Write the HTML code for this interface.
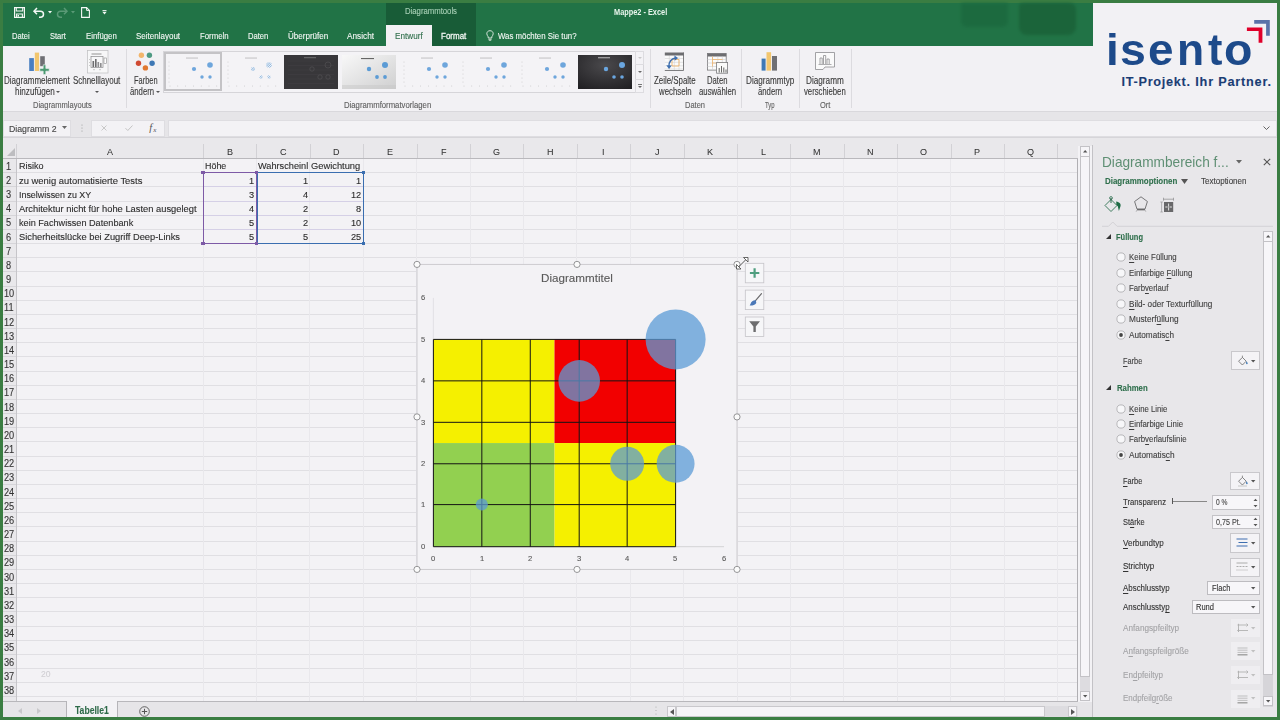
<!DOCTYPE html>
<html><head><meta charset="utf-8"><style>
html,body{margin:0;padding:0;width:1280px;height:720px;overflow:hidden;}
body{position:relative;background:#3a7d42;font-family:"Liberation Sans",sans-serif;}
.a{position:absolute;}
.t{position:absolute;white-space:pre;line-height:1;transform-origin:0 0;-webkit-text-stroke:0.12px currentColor;}
svg{position:absolute;overflow:visible;}

</style></head><body>
<div class="a" style="left:3px;top:3px;width:1274px;height:42.5px;background:#217346;"></div>
<div class="a" style="left:961px;top:3px;width:47px;height:24px;background:#1c6a3f;filter:blur(1.5px);border-radius:2px 2px 6px 6px;opacity:.9"></div>
<div class="a" style="left:1019px;top:3px;width:57px;height:32px;background:#1b6339;filter:blur(1.5px);border-radius:4px 6px 8px 8px;opacity:.9"></div>
<div class="a" style="left:386px;top:3px;width:90px;height:42.5px;background:#185c37;"></div>
<div class="a" style="left:386px;top:24.8px;width:45.5px;height:21px;background:#f2f1f4;"></div>
<div class="t" style="left:11.70px;top:31.36px;font-size:9.5px;color:#f3f7f4;transform:scaleX(0.7977);">Datei</div>
<div class="t" style="left:50.00px;top:31.36px;font-size:9.5px;color:#f3f7f4;transform:scaleX(0.7925);">Start</div>
<div class="t" style="left:85.60px;top:31.36px;font-size:9.5px;color:#f3f7f4;transform:scaleX(0.8210);">Einfügen</div>
<div class="t" style="left:135.90px;top:31.36px;font-size:9.5px;color:#f3f7f4;transform:scaleX(0.8433);">Seitenlayout</div>
<div class="t" style="left:199.70px;top:31.36px;font-size:9.5px;color:#f3f7f4;transform:scaleX(0.8208);">Formeln</div>
<div class="t" style="left:247.80px;top:31.36px;font-size:9.5px;color:#f3f7f4;transform:scaleX(0.8005);">Daten</div>
<div class="t" style="left:288.10px;top:31.36px;font-size:9.5px;color:#f3f7f4;transform:scaleX(0.8458);">Überprüfen</div>
<div class="t" style="left:347.00px;top:31.36px;font-size:9.5px;color:#f3f7f4;transform:scaleX(0.8666);">Ansicht</div>
<div class="t" style="left:394.50px;top:31.36px;font-size:9.5px;color:#2e6e4a;transform:scaleX(0.8597);">Entwurf</div>
<div class="t" style="left:441.40px;top:31.36px;font-size:9.5px;color:#f3f7f4;transform:scaleX(0.8407);-webkit-text-stroke:0.3px currentColor;">Format</div>
<div class="t" style="left:497.90px;top:31.36px;font-size:9.5px;color:#f3f7f4;transform:scaleX(0.8243);">Was möchten Sie tun?</div>
<div class="t" style="left:404.60px;top:7.40px;font-size:9px;color:#a8d0b6;transform:scaleX(0.8591);">Diagrammtools</div>
<div class="t" style="left:613.90px;top:7.66px;font-size:9.3px;color:#eaf6ee;font-weight:700;transform:scaleX(0.7920);-webkit-text-stroke:0;">Mappe2 - Excel</div>
<svg style="left:486px;top:30px" width="8" height="11" viewBox="0 0 8 11"><path d="M4 0.7C2 0.7 0.8 2.1 0.8 3.8c0 1.3 1 2.1 1.4 3v1.2h3.6V6.8c.4-.9 1.4-1.7 1.4-3C7.2 2.1 6 .7 4 .7z" fill="none" stroke="#e8f0ea" stroke-width="0.9"/><path d="M2.4 9.3h3.2M2.8 10.3h2.4" stroke="#e8f0ea" stroke-width="0.8"/></svg>
<svg style="left:14px;top:7px" width="11" height="11" viewBox="0 0 11 11"><path d="M0.6 0.6h9.8v9.8H0.6z" fill="none" stroke="#f4f8f5" stroke-width="1.2"/><path d="M2.3 0.6v3.4h6.4V0.6" fill="none" stroke="#f4f8f5" stroke-width="1.1"/><path d="M2.6 10.4V7h5.8v3.4" fill="none" stroke="#f4f8f5" stroke-width="1.1"/><rect x="3.6" y="8" width="1.4" height="1.6" fill="#f4f8f5"/></svg>
<svg style="left:33px;top:7px" width="12" height="11" viewBox="0 0 12 11"><path d="M1 4.2h6.3c1.9 0 3.2 1.3 3.2 3s-1.3 3-3.2 3H6" fill="none" stroke="#f4f8f5" stroke-width="1.5"/><path d="M4 1.1L1 4.2l3 3.1" fill="none" stroke="#f4f8f5" stroke-width="1.5"/></svg>
<svg style="left:47.5px;top:10.5px" width="4" height="3" viewBox="0 0 4 3"><path d="M0 0h4L2 2.5z" fill="#f4f8f5"/></svg>
<svg style="left:56px;top:7px" width="12" height="11" viewBox="0 0 12 11"><path d="M11 4.2H4.7c-1.9 0-3.2 1.3-3.2 3s1.3 3 3.2 3H6" fill="none" stroke="#5a9a76" stroke-width="1.5"/><path d="M8 1.1l3 3.1-3 3.1" fill="none" stroke="#5a9a76" stroke-width="1.5"/></svg>
<svg style="left:71px;top:10.5px" width="4" height="3" viewBox="0 0 4 3"><path d="M0 0h4L2 2.5z" fill="#5a9a76"/></svg>
<svg style="left:81px;top:7px" width="9" height="11" viewBox="0 0 9 11"><path d="M0.6 0.6h5l2.8 2.8v7H0.6z" fill="none" stroke="#f4f8f5" stroke-width="1.1"/><path d="M5.6 0.6v2.8h2.8" fill="none" stroke="#f4f8f5" stroke-width="1"/></svg>
<svg style="left:102px;top:10px" width="5" height="5" viewBox="0 0 5 5"><path d="M0.5 0.5h4" stroke="#f4f8f5" stroke-width="0.9"/><path d="M0.3 1.8h4.4L2.5 4.4z" fill="#f4f8f5"/></svg>
<div class="a" style="left:1092.5px;top:3px;width:184.5px;height:108px;background:#f2f1f4;"></div>
<div class="t" style="left:1105.62px;top:28.41px;font-size:44px;color:#1d4a8a;font-weight:700;transform:scaleX(1.0417);-webkit-text-stroke:0;">i</div>
<div class="t" style="left:1119.79px;top:28.41px;font-size:44px;color:#1d4a8a;font-weight:700;transform:scaleX(1.0571);-webkit-text-stroke:0;">s</div>
<div class="t" style="left:1147.91px;top:28.41px;font-size:44px;color:#1d4a8a;font-weight:700;transform:scaleX(1.0429);-webkit-text-stroke:0;">e</div>
<div class="t" style="left:1176.67px;top:28.41px;font-size:44px;color:#1d4a8a;font-weight:700;transform:scaleX(1.0095);-webkit-text-stroke:0;">n</div>
<div class="t" style="left:1207.50px;top:28.41px;font-size:44px;color:#1d4a8a;font-weight:700;transform:scaleX(0.9821);-webkit-text-stroke:0;">t</div>
<div class="t" style="left:1224.49px;top:28.41px;font-size:44px;color:#1d4a8a;font-weight:700;transform:scaleX(1.0565);-webkit-text-stroke:0;">o</div>
<div class="t" style="left:1121.50px;top:76.25px;font-size:12.7px;color:#1b3d74;font-weight:700;letter-spacing:0.72px;-webkit-text-stroke:0.1px currentColor;">IT-Projekt.</div>
<div class="t" style="left:1195.25px;top:76.25px;font-size:12.7px;color:#1b3d74;font-weight:700;letter-spacing:0.8px;-webkit-text-stroke:0.1px currentColor;">Ihr Partner.</div>
<svg style="left:1246px;top:19px" width="26" height="25" viewBox="0 0 26 25"><path d="M8.2 1.1h15.6v3.7H8.2z M20.1 1.1h3.7v15.6h-3.7z" fill="#5b72a8"/><path d="M0.9 8.5h15.5v3.5H0.9z M12.6 8.5h3.8v15.3h-3.8z" fill="#e0002a"/></svg>
<div class="a" style="left:3px;top:45.5px;width:1089.5px;height:65.5px;background:#f2f1f4;"></div>
<div class="a" style="left:3px;top:111px;width:1274px;height:8px;background:#e6e5e8;"></div>
<div class="a" style="left:3px;top:110.6px;width:1274px;height:0.8px;background:#d9d8dc;"></div>
<div class="a" style="left:125.5px;top:49px;width:0.8px;height:59px;background:#dcdbdf;"></div>
<div class="a" style="left:649.5px;top:49px;width:0.8px;height:59px;background:#dcdbdf;"></div>
<div class="a" style="left:741.4px;top:49px;width:0.8px;height:59px;background:#dcdbdf;"></div>
<div class="a" style="left:799px;top:49px;width:0.8px;height:59px;background:#dcdbdf;"></div>
<div class="a" style="left:850.5px;top:49px;width:0.8px;height:59px;background:#dcdbdf;"></div>
<svg style="left:28px;top:52px" width="22" height="22" viewBox="0 0 22 22"><rect x="1.2" y="6.1" width="4.7" height="12.9" fill="#4a7fc1"/><rect x="6.8" y="0.6" width="4.3" height="18.4" fill="#f2c66e"/><rect x="12.2" y="4.2" width="4.6" height="10" fill="#6f6f74"/><path d="M15.2 12.8h2.6v3.6h3.4v2.8h-3.4v3.4h-2.6v-3.4h-3.4v-2.8h3.4z" fill="#4b9a72" stroke="#f2f1f4" stroke-width="0.6"/></svg>
<div class="t" style="left:4.35px;top:75.81px;font-size:10px;color:#3b3b3b;transform:scaleX(0.8041);">Diagrammelement</div>
<div class="t" style="left:14.60px;top:86.71px;font-size:10px;color:#3b3b3b;transform:scaleX(0.8133);">hinzufügen</div>
<svg style="left:56.4px;top:91.0px" width="4" height="2.0" viewBox="0 0 4 2"><path d="M0 0h4L2 2z" fill="#555"/></svg>
<svg style="left:86.5px;top:50px" width="22" height="24" viewBox="0 0 22 24"><rect x="0.5" y="0.5" width="20.5" height="22.5" fill="#f7f7f8" stroke="#bdbdbf" stroke-width="0.7"/><rect x="4.5" y="3.2" width="10" height="1.6" fill="#b8b8b8"/><rect x="4" y="6.5" width="12" height="11" fill="none" stroke="#8b8b8d" stroke-width="0.7"/><rect x="5.5" y="11" width="1.6" height="6" fill="#6d6d6f"/><rect x="8" y="9" width="1.6" height="8" fill="#6d6d6f"/><rect x="10.5" y="12" width="1.6" height="5" fill="#8d8d8f"/><rect x="13" y="13" width="1.6" height="4" fill="#8d8d8f"/><rect x="17" y="8" width="2.6" height="5.5" fill="#fff" stroke="#8b8b8d" stroke-width="0.6"/><rect x="2" y="9" width="0.7" height="0.7" fill="#999"/><rect x="2" y="12" width="0.7" height="0.7" fill="#999"/><rect x="2" y="15" width="0.7" height="0.7" fill="#999"/><rect x="6" y="19.5" width="2" height="0.6" fill="#aaa"/><rect x="12" y="19.5" width="2" height="0.6" fill="#aaa"/></svg>
<div class="t" style="left:73.35px;top:75.81px;font-size:10px;color:#3b3b3b;transform:scaleX(0.7952);">Schnelllayout</div>
<svg style="left:95.0px;top:90.8px" width="4" height="2.0" viewBox="0 0 4 2"><path d="M0 0h4L2 2z" fill="#555"/></svg>
<svg style="left:134px;top:51px" width="22" height="21" viewBox="0 0 22 21"><circle cx="7.4" cy="4.3" r="2.7" fill="#f2b56b"/><circle cx="15.4" cy="4.3" r="2.7" fill="#4e9a83"/><circle cx="4.5" cy="12.2" r="2.7" fill="#d04a32"/><circle cx="18.1" cy="12.2" r="2.7" fill="#3e78b5"/><circle cx="11.4" cy="16.9" r="2.7" fill="#e07830"/></svg>
<div class="t" style="left:133.50px;top:75.81px;font-size:10px;color:#3b3b3b;transform:scaleX(0.7448);">Farben</div>
<div class="t" style="left:129.95px;top:86.71px;font-size:10px;color:#3b3b3b;transform:scaleX(0.7739);">ändern</div>
<svg style="left:156.3px;top:91.0px" width="4" height="2.0" viewBox="0 0 4 2"><path d="M0 0h4L2 2z" fill="#555"/></svg>
<div class="t" style="left:32.95px;top:101.35px;font-size:8.5px;color:#5f5f5f;transform:scaleX(0.8875);">Diagrammlayouts</div>
<div class="a" style="left:163.2px;top:50.5px;width:481px;height:42.2px;background:#f4f3f6;border:0.8px solid #d6d5d9;box-sizing:border-box;"></div>
<div class="a" style="left:163.5px;top:52px;width:58.5px;height:38.6px;border:2px solid #c4c3c6;box-sizing:border-box;"></div>
<svg style="left:166.0px;top:54.8px" width="54" height="34" viewBox="0 0 54 34"><rect x="20" y="2.6" width="12" height="0.9" fill="#777" opacity="0.45"/><circle cx="4.0" cy="31" r="0.4" fill="#aaa"/><circle cx="11.8" cy="31" r="0.4" fill="#aaa"/><circle cx="19.6" cy="31" r="0.4" fill="#aaa"/><circle cx="27.4" cy="31" r="0.4" fill="#aaa"/><circle cx="35.2" cy="31" r="0.4" fill="#aaa"/><circle cx="43.0" cy="31" r="0.4" fill="#aaa"/><circle cx="50.8" cy="31" r="0.4" fill="#aaa"/><circle cx="3" cy="7" r="0.4" fill="#aaa"/><circle cx="3" cy="11" r="0.4" fill="#aaa"/><circle cx="3" cy="15" r="0.4" fill="#aaa"/><circle cx="3" cy="19" r="0.4" fill="#aaa"/><circle cx="3" cy="23" r="0.4" fill="#aaa"/><circle cx="3" cy="27" r="0.4" fill="#aaa"/><circle cx="28" cy="14" r="2.1" fill="#6ea6dc" opacity="1"/><circle cx="44" cy="10" r="2.8" fill="#6ea6dc" opacity="1"/><circle cx="36" cy="22" r="1.7" fill="#6ea6dc" opacity="1"/><circle cx="44" cy="22" r="1.7" fill="#6ea6dc" opacity="1"/></svg>
<svg style="left:224.8px;top:54.8px" width="54" height="34" viewBox="0 0 54 34"><rect x="20" y="2.6" width="12" height="0.9" fill="#777" opacity="0.45"/><circle cx="4.0" cy="31" r="0.4" fill="#aaa"/><circle cx="11.8" cy="31" r="0.4" fill="#aaa"/><circle cx="19.6" cy="31" r="0.4" fill="#aaa"/><circle cx="27.4" cy="31" r="0.4" fill="#aaa"/><circle cx="35.2" cy="31" r="0.4" fill="#aaa"/><circle cx="43.0" cy="31" r="0.4" fill="#aaa"/><circle cx="50.8" cy="31" r="0.4" fill="#aaa"/><circle cx="3" cy="7" r="0.4" fill="#aaa"/><circle cx="3" cy="11" r="0.4" fill="#aaa"/><circle cx="3" cy="15" r="0.4" fill="#aaa"/><circle cx="3" cy="19" r="0.4" fill="#aaa"/><circle cx="3" cy="23" r="0.4" fill="#aaa"/><circle cx="3" cy="27" r="0.4" fill="#aaa"/><defs><pattern id="hp" width="1.6" height="1.6" patternUnits="userSpaceOnUse" patternTransform="rotate(45)"><rect width="0.8" height="1.6" fill="#5b9bd5"/></pattern></defs><circle cx="28" cy="14" r="2.1" fill="url(#hp)" opacity="0.7"/><circle cx="44" cy="10" r="2.8" fill="url(#hp)" opacity="0.7"/><circle cx="36" cy="22" r="1.7" fill="url(#hp)" opacity="0.7"/><circle cx="44" cy="22" r="1.7" fill="url(#hp)" opacity="0.7"/></svg>
<svg style="left:283.6px;top:54.8px" width="54" height="34" viewBox="0 0 54 34"><rect x="0" y="0" width="54" height="34" fill="#38373a"/><line x1="4" x2="50" y1="6.0" y2="6.0" stroke="#424144" stroke-width="0.5"/><line x1="4" x2="50" y1="10.5" y2="10.5" stroke="#424144" stroke-width="0.5"/><line x1="4" x2="50" y1="15.0" y2="15.0" stroke="#424144" stroke-width="0.5"/><line x1="4" x2="50" y1="19.5" y2="19.5" stroke="#424144" stroke-width="0.5"/><line x1="4" x2="50" y1="24.0" y2="24.0" stroke="#424144" stroke-width="0.5"/><line x1="4" x2="50" y1="28.5" y2="28.5" stroke="#424144" stroke-width="0.5"/><rect x="20" y="2.2" width="12" height="1" fill="#888" opacity="0.7"/><circle cx="28" cy="14" r="2.2" fill="none" stroke="#555457" stroke-width="0.6"/><circle cx="44" cy="10" r="3" fill="none" stroke="#555457" stroke-width="0.6"/><circle cx="36" cy="22" r="2.2" fill="none" stroke="#555457" stroke-width="0.6"/><circle cx="44" cy="22" r="2.2" fill="none" stroke="#555457" stroke-width="0.6"/></svg>
<svg style="left:342.4px;top:54.8px" width="54" height="34" viewBox="0 0 54 34"><defs><linearGradient id="gg" x1="0" y1="0" x2="1" y2="1"><stop offset="0" stop-color="#f8f8f8"/><stop offset="1" stop-color="#cfcfd0"/></linearGradient></defs><rect x="0" y="0" width="54" height="34" fill="url(#gg)"/><rect x="0" y="30" width="54" height="4" fill="#c8c8c8" opacity="0.5"/><rect x="19" y="3" width="13" height="1.1" fill="#444" opacity="0.8"/><circle cx="27" cy="14" r="2.2" fill="#5b9bd5"/><circle cx="43" cy="10" r="3" fill="#5b9bd5"/><circle cx="35" cy="22" r="1.9" fill="#5b9bd5"/><circle cx="43" cy="22" r="1.9" fill="#5b9bd5"/></svg>
<svg style="left:401.2px;top:54.8px" width="54" height="34" viewBox="0 0 54 34"><rect x="20" y="2.6" width="12" height="0.9" fill="#777" opacity="0.45"/><circle cx="4.0" cy="31" r="0.4" fill="#aaa"/><circle cx="11.8" cy="31" r="0.4" fill="#aaa"/><circle cx="19.6" cy="31" r="0.4" fill="#aaa"/><circle cx="27.4" cy="31" r="0.4" fill="#aaa"/><circle cx="35.2" cy="31" r="0.4" fill="#aaa"/><circle cx="43.0" cy="31" r="0.4" fill="#aaa"/><circle cx="50.8" cy="31" r="0.4" fill="#aaa"/><circle cx="3" cy="7" r="0.4" fill="#aaa"/><circle cx="3" cy="11" r="0.4" fill="#aaa"/><circle cx="3" cy="15" r="0.4" fill="#aaa"/><circle cx="3" cy="19" r="0.4" fill="#aaa"/><circle cx="3" cy="23" r="0.4" fill="#aaa"/><circle cx="3" cy="27" r="0.4" fill="#aaa"/><circle cx="28" cy="14" r="2.1" fill="#6ea6dc" opacity="1"/><circle cx="44" cy="10" r="2.8" fill="#6ea6dc" opacity="1"/><circle cx="36" cy="22" r="1.7" fill="#6ea6dc" opacity="1"/><circle cx="44" cy="22" r="1.7" fill="#6ea6dc" opacity="1"/></svg>
<svg style="left:460.0px;top:54.8px" width="54" height="34" viewBox="0 0 54 34"><rect x="20" y="2.6" width="12" height="0.9" fill="#777" opacity="0.45"/><circle cx="4.0" cy="31" r="0.4" fill="#aaa"/><circle cx="11.8" cy="31" r="0.4" fill="#aaa"/><circle cx="19.6" cy="31" r="0.4" fill="#aaa"/><circle cx="27.4" cy="31" r="0.4" fill="#aaa"/><circle cx="35.2" cy="31" r="0.4" fill="#aaa"/><circle cx="43.0" cy="31" r="0.4" fill="#aaa"/><circle cx="50.8" cy="31" r="0.4" fill="#aaa"/><circle cx="3" cy="7" r="0.4" fill="#aaa"/><circle cx="3" cy="11" r="0.4" fill="#aaa"/><circle cx="3" cy="15" r="0.4" fill="#aaa"/><circle cx="3" cy="19" r="0.4" fill="#aaa"/><circle cx="3" cy="23" r="0.4" fill="#aaa"/><circle cx="3" cy="27" r="0.4" fill="#aaa"/><circle cx="28" cy="14" r="2.1" fill="#6ea6dc" opacity="1"/><circle cx="44" cy="10" r="2.8" fill="#6ea6dc" opacity="1"/><circle cx="36" cy="22" r="1.7" fill="#6ea6dc" opacity="1"/><circle cx="44" cy="22" r="1.7" fill="#6ea6dc" opacity="1"/></svg>
<svg style="left:518.8px;top:54.8px" width="54" height="34" viewBox="0 0 54 34"><rect x="20" y="2.6" width="12" height="0.9" fill="#777" opacity="0.45"/><circle cx="4.0" cy="31" r="0.4" fill="#aaa"/><circle cx="11.8" cy="31" r="0.4" fill="#aaa"/><circle cx="19.6" cy="31" r="0.4" fill="#aaa"/><circle cx="27.4" cy="31" r="0.4" fill="#aaa"/><circle cx="35.2" cy="31" r="0.4" fill="#aaa"/><circle cx="43.0" cy="31" r="0.4" fill="#aaa"/><circle cx="50.8" cy="31" r="0.4" fill="#aaa"/><circle cx="3" cy="7" r="0.4" fill="#aaa"/><circle cx="3" cy="11" r="0.4" fill="#aaa"/><circle cx="3" cy="15" r="0.4" fill="#aaa"/><circle cx="3" cy="19" r="0.4" fill="#aaa"/><circle cx="3" cy="23" r="0.4" fill="#aaa"/><circle cx="3" cy="27" r="0.4" fill="#aaa"/><circle cx="28" cy="14" r="2.1" fill="#6ea6dc" opacity="1"/><circle cx="44" cy="10" r="2.8" fill="#6ea6dc" opacity="1"/><circle cx="36" cy="22" r="1.7" fill="#6ea6dc" opacity="1"/><circle cx="44" cy="22" r="1.7" fill="#6ea6dc" opacity="1"/></svg>
<svg style="left:577.6px;top:54.8px" width="54" height="34" viewBox="0 0 54 34"><defs><radialGradient id="dg" cx="0.5" cy="0.3" r="0.8"><stop offset="0" stop-color="#4a494c"/><stop offset="1" stop-color="#222124"/></radialGradient></defs><rect x="0" y="0" width="54" height="34" fill="url(#dg)"/><rect x="20" y="2.2" width="12" height="1.1" fill="#d0d0d0" opacity="0.8"/><circle cx="28" cy="14" r="2.2" fill="#6aa6e0"/><circle cx="44" cy="10" r="3" fill="#6aa6e0"/><circle cx="36" cy="22" r="1.8" fill="#6aa6e0"/><circle cx="44" cy="22" r="1.8" fill="#6aa6e0"/></svg>
<div class="a" style="left:635.2px;top:50.5px;width:9px;height:42.2px;background:#f4f3f6;border:0.8px solid #d6d5d9;box-sizing:border-box;"></div>
<div class="a" style="left:635.2px;top:50.5px;width:9px;height:14px;border:0.8px solid #dddce0;box-sizing:border-box;"></div>
<div class="a" style="left:635.2px;top:78.5px;width:9px;height:14.2px;border:0.8px solid #dddce0;box-sizing:border-box;"></div>
<svg style="left:637.7px;top:57.0px" width="4" height="2.0" viewBox="0 0 4 2"><path d="M0 0h4L2 2z" fill="#c9c9c9"/></svg>
<svg style="left:637.7px;top:70.5px" width="4" height="2.0" viewBox="0 0 4 2"><path d="M0 0h4L2 2z" fill="#666"/></svg>
<div class="a" style="left:637.7px;top:84px;width:4px;height:0.7px;background:#777;"></div>
<svg style="left:637.7px;top:86.0px" width="4" height="2.0" viewBox="0 0 4 2"><path d="M0 0h4L2 2z" fill="#666"/></svg>
<div class="t" style="left:344.00px;top:101.35px;font-size:8.5px;color:#5f5f5f;transform:scaleX(0.9092);">Diagrammformatvorlagen</div>
<svg style="left:664px;top:51.5px" width="21" height="19" viewBox="0 0 21 19"><rect x="0.8" y="0.5" width="19" height="18" fill="#fafafa"/><path d="M0.8 6.5h19M0.8 10.3h19M0.8 13.8h19M0.8 17h19M5.3 3.5v15M10.3 3.5v15M15 3.5v15" stroke="#d3d3d5" stroke-width="0.6"/><path d="M8 7.5h7v6.5H8z" fill="none" stroke="#f0b060" stroke-width="0.8"/><path d="M19.5 0.5v18H0.8" fill="none" stroke="#707073" stroke-width="0.9"/><rect x="0.8" y="0.5" width="19" height="3" fill="#6d6d70"/><path d="M5 14.5C4.5 10 7.5 6.5 11.5 6" fill="none" stroke="#3e6fb0" stroke-width="1.5"/><path d="M10.5 3.5l3.6 2.5-3.4 2.8z" fill="#3e6fb0"/><path d="M2.3 13.2l2.7 3.8 2.8-3.6z" fill="#3e6fb0"/></svg>
<div class="t" style="left:653.70px;top:75.81px;font-size:10px;color:#3b3b3b;transform:scaleX(0.7877);">Zeile/Spalte</div>
<div class="t" style="left:658.60px;top:86.91px;font-size:10px;color:#3b3b3b;transform:scaleX(0.7817);">wechseln</div>
<svg style="left:707px;top:52.5px" width="22" height="21" viewBox="0 0 22 21"><rect x="0.5" y="0.5" width="18.7" height="16.6" fill="#fafafa" stroke="#7a7a7d" stroke-width="0.8"/><rect x="0.5" y="0.5" width="18.7" height="3" fill="#6d6d70"/><path d="M0.5 6.5h18.7M0.5 10h18.7M0.5 13.5h18.7M5.5 3.5v13.6M10.8 3.5v13.6M15.3 3.5v13.6" stroke="#cfcfd1" stroke-width="0.6"/><path d="M5.5 6.5h10M5.5 10h10M5.5 3.5v10" stroke="#f0b060" stroke-width="0.7"/><rect x="9.6" y="9.5" width="11" height="10.7" fill="#fafafa" stroke="#7a7a7d" stroke-width="0.8"/><path d="M12.2 19.5v-4.5M14.5 19.5v-6.5M16.8 19.5v-5M19 19.5v-3" stroke="#555" stroke-width="0.9"/></svg>
<div class="t" style="left:707.45px;top:75.81px;font-size:10px;color:#3b3b3b;transform:scaleX(0.7681);">Daten</div>
<div class="t" style="left:698.75px;top:86.91px;font-size:10px;color:#3b3b3b;transform:scaleX(0.7759);">auswählen</div>
<div class="t" style="left:685.00px;top:101.35px;font-size:8.5px;color:#5f5f5f;transform:scaleX(0.8815);">Daten</div>
<svg style="left:761px;top:52px" width="17" height="19" viewBox="0 0 17 19"><rect x="0.6" y="6.6" width="4" height="12" fill="#3e78b5"/><rect x="5.5" y="0.2" width="4.6" height="18.4" fill="#f2c66e"/><rect x="11" y="4" width="5" height="14.6" fill="#6f6f74"/></svg>
<div class="t" style="left:745.70px;top:75.81px;font-size:10px;color:#3b3b3b;transform:scaleX(0.8139);">Diagrammtyp</div>
<div class="t" style="left:757.65px;top:86.91px;font-size:10px;color:#3b3b3b;transform:scaleX(0.7739);">ändern</div>
<div class="t" style="left:765.35px;top:101.35px;font-size:8.5px;color:#5f5f5f;transform:scaleX(0.6933);">Typ</div>
<svg style="left:815px;top:52px" width="21" height="19" viewBox="0 0 21 19"><path d="M0.5 0.5h19v14.5H10l-2 2.5H0.5z" fill="#fafafa" stroke="#8d8d8f" stroke-width="0.8"/><path d="M5 12V6h2.2v6M8.5 12V3.5h2.2V12M12 12V7h2.2v5" fill="none" stroke="#8d8d8f" stroke-width="0.8"/><path d="M3.5 12.5h13" stroke="#8d8d8f" stroke-width="0.7"/></svg>
<div class="t" style="left:806.30px;top:75.81px;font-size:10px;color:#3b3b3b;transform:scaleX(0.8195);">Diagramm</div>
<div class="t" style="left:804.15px;top:86.91px;font-size:10px;color:#3b3b3b;transform:scaleX(0.7733);">verschieben</div>
<div class="t" style="left:820.00px;top:101.35px;font-size:8.5px;color:#5f5f5f;transform:scaleX(0.8804);">Ort</div>
<div class="a" style="left:3px;top:119px;width:1274px;height:18.5px;background:#e6e5e8;"></div>
<div class="a" style="left:3px;top:119.5px;width:68px;height:17.5px;background:#f3f2f5;border:0.7px solid #dedde1;box-sizing:border-box;"></div>
<div class="a" style="left:91.4px;top:119.5px;width:73.4px;height:17.5px;background:#f3f2f5;border:0.7px solid #dedde1;box-sizing:border-box;"></div>
<div class="a" style="left:167.5px;top:119.5px;width:1109.5px;height:17.5px;background:#f3f2f5;border:0.7px solid #dedde1;box-sizing:border-box;"></div>
<div class="t" style="left:8.60px;top:123.76px;font-size:9.5px;color:#444;transform:scaleX(0.9198);">Diagramm 2</div>
<svg style="left:62px;top:126px" width="5" height="3" viewBox="0 0 5 3"><path d="M0 0h5L2.5 3z" fill="#666"/></svg>
<svg style="left:80.5px;top:124px" width="2" height="8" viewBox="0 0 2 8"><circle cx="1" cy="1" r="0.6" fill="#999"/><circle cx="1" cy="4" r="0.6" fill="#999"/><circle cx="1" cy="7" r="0.6" fill="#999"/></svg>
<svg style="left:101px;top:125px" width="6" height="6" viewBox="0 0 6 6"><path d="M0.5 0.5l5 5M5.5 0.5l-5 5" stroke="#bdbdbd" stroke-width="0.8"/></svg>
<svg style="left:124.5px;top:125px" width="8" height="6" viewBox="0 0 8 6"><path d="M0.5 3.2l2.3 2.3 4.7-5" fill="none" stroke="#bdbdbd" stroke-width="0.9"/></svg>
<div class="t" style="left:149.20px;top:122.87px;font-size:10.5px;color:#555;font-family:'Liberation Serif';font-style:italic;-webkit-text-stroke:0;">f</div>
<div class="t" style="left:153.30px;top:126.58px;font-size:7px;color:#555;font-family:'Liberation Serif';font-style:italic;-webkit-text-stroke:0;">x</div>
<svg style="left:1263px;top:125.5px" width="7" height="4" viewBox="0 0 7 4"><path d="M0.5 0.5l3 3 3-3" fill="none" stroke="#555" stroke-width="0.9"/></svg>
<div class="a" style="left:3px;top:137px;width:1089.5px;height:6.5px;background:#e9e8eb;"></div>
<div class="a" style="left:3px;top:137px;width:1274px;height:0.7px;background:#d6d5d9;"></div>
<div class="a" style="left:3px;top:143.5px;width:1074.5px;height:15px;background:#e9e8eb;"></div>
<div class="a" style="left:3px;top:158.1px;width:1074.5px;height:0.8px;background:#b9b8bc;"></div>
<svg style="left:7px;top:147.5px" width="8" height="8" viewBox="0 0 8 8"><path d="M8 0v8H0z" fill="#bdbdc0"/></svg>
<div class="t" style="left:106.74px;top:146.66px;font-size:9.5px;color:#333;transform:scaleX(0.9500);-webkit-text-stroke:0.05px currentColor;">A</div>
<div class="a" style="left:203px;top:143.5px;width:0.7px;height:14.6px;background:#d2d1d5;"></div>
<div class="t" style="left:226.69px;top:146.66px;font-size:9.5px;color:#333;transform:scaleX(0.9500);-webkit-text-stroke:0.05px currentColor;">B</div>
<div class="a" style="left:256.4px;top:143.5px;width:0.7px;height:14.6px;background:#d2d1d5;"></div>
<div class="t" style="left:279.83px;top:146.66px;font-size:9.5px;color:#333;transform:scaleX(0.9500);-webkit-text-stroke:0.05px currentColor;">C</div>
<div class="a" style="left:309.8px;top:143.5px;width:0.7px;height:14.6px;background:#d2d1d5;"></div>
<div class="t" style="left:333.23px;top:146.66px;font-size:9.5px;color:#333;transform:scaleX(0.9500);-webkit-text-stroke:0.05px currentColor;">D</div>
<div class="a" style="left:363.2px;top:143.5px;width:0.7px;height:14.6px;background:#d2d1d5;"></div>
<div class="t" style="left:386.89px;top:146.66px;font-size:9.5px;color:#333;transform:scaleX(0.9500);-webkit-text-stroke:0.05px currentColor;">E</div>
<div class="a" style="left:416.6px;top:143.5px;width:0.7px;height:14.6px;background:#d2d1d5;"></div>
<div class="t" style="left:440.54px;top:146.66px;font-size:9.5px;color:#333;transform:scaleX(0.9500);-webkit-text-stroke:0.05px currentColor;">F</div>
<div class="a" style="left:470.0px;top:143.5px;width:0.7px;height:14.6px;background:#d2d1d5;"></div>
<div class="t" style="left:493.19px;top:146.66px;font-size:9.5px;color:#333;transform:scaleX(0.9500);-webkit-text-stroke:0.05px currentColor;">G</div>
<div class="a" style="left:523.4px;top:143.5px;width:0.7px;height:14.6px;background:#d2d1d5;"></div>
<div class="t" style="left:546.83px;top:146.66px;font-size:9.5px;color:#333;transform:scaleX(0.9500);-webkit-text-stroke:0.05px currentColor;">H</div>
<div class="a" style="left:576.8px;top:143.5px;width:0.7px;height:14.6px;background:#d2d1d5;"></div>
<div class="t" style="left:602.25px;top:146.66px;font-size:9.5px;color:#333;transform:scaleX(0.9500);-webkit-text-stroke:0.05px currentColor;">I</div>
<div class="a" style="left:630.2px;top:143.5px;width:0.7px;height:14.6px;background:#d2d1d5;"></div>
<div class="t" style="left:654.64px;top:146.66px;font-size:9.5px;color:#333;transform:scaleX(0.9500);-webkit-text-stroke:0.05px currentColor;">J</div>
<div class="a" style="left:683.5999999999999px;top:143.5px;width:0.7px;height:14.6px;background:#d2d1d5;"></div>
<div class="t" style="left:707.29px;top:146.66px;font-size:9.5px;color:#333;transform:scaleX(0.9500);-webkit-text-stroke:0.05px currentColor;">K</div>
<div class="a" style="left:737.0px;top:143.5px;width:0.7px;height:14.6px;background:#d2d1d5;"></div>
<div class="t" style="left:761.18px;top:146.66px;font-size:9.5px;color:#333;transform:scaleX(0.9500);-webkit-text-stroke:0.05px currentColor;">L</div>
<div class="a" style="left:790.4px;top:143.5px;width:0.7px;height:14.6px;background:#d2d1d5;"></div>
<div class="t" style="left:813.34px;top:146.66px;font-size:9.5px;color:#333;transform:scaleX(0.9500);-webkit-text-stroke:0.05px currentColor;">M</div>
<div class="a" style="left:843.8px;top:143.5px;width:0.7px;height:14.6px;background:#d2d1d5;"></div>
<div class="t" style="left:867.23px;top:146.66px;font-size:9.5px;color:#333;transform:scaleX(0.9500);-webkit-text-stroke:0.05px currentColor;">N</div>
<div class="a" style="left:897.1999999999999px;top:143.5px;width:0.7px;height:14.6px;background:#d2d1d5;"></div>
<div class="t" style="left:920.39px;top:146.66px;font-size:9.5px;color:#333;transform:scaleX(0.9500);-webkit-text-stroke:0.05px currentColor;">O</div>
<div class="a" style="left:950.6px;top:143.5px;width:0.7px;height:14.6px;background:#d2d1d5;"></div>
<div class="t" style="left:974.29px;top:146.66px;font-size:9.5px;color:#333;transform:scaleX(0.9500);-webkit-text-stroke:0.05px currentColor;">P</div>
<div class="a" style="left:1004.0px;top:143.5px;width:0.7px;height:14.6px;background:#d2d1d5;"></div>
<div class="t" style="left:1027.19px;top:146.66px;font-size:9.5px;color:#333;transform:scaleX(0.9500);-webkit-text-stroke:0.05px currentColor;">Q</div>
<div class="a" style="left:1057.4px;top:143.5px;width:0.7px;height:14.6px;background:#d2d1d5;"></div>
<div class="a" style="left:16.4px;top:143.5px;width:0.7px;height:14.6px;background:#d2d1d5;"></div>
<div class="a" style="left:16.5px;top:158.8px;width:1061px;height:542.6px;background:#f3f2f5;"></div>
<div class="a" style="left:3px;top:158.8px;width:13.5px;height:542.6px;background:#e9e8eb;"></div>
<div class="a" style="left:16.2px;top:158.8px;width:0.7px;height:542.6px;background:#c6c5c9;"></div>
<div class="a" style="left:3px;top:172.31px;width:13.3px;height:0.7px;background:#d6d5d9"></div><div class="a" style="left:17px;top:172.31px;width:1060.5px;height:0.7px;background:#e0dfe3"></div><div class="a" style="left:3px;top:186.48px;width:13.3px;height:0.7px;background:#d6d5d9"></div><div class="a" style="left:17px;top:186.48px;width:1060.5px;height:0.7px;background:#e0dfe3"></div><div class="a" style="left:3px;top:200.65px;width:13.3px;height:0.7px;background:#d6d5d9"></div><div class="a" style="left:17px;top:200.65px;width:1060.5px;height:0.7px;background:#e0dfe3"></div><div class="a" style="left:3px;top:214.81px;width:13.3px;height:0.7px;background:#d6d5d9"></div><div class="a" style="left:17px;top:214.81px;width:1060.5px;height:0.7px;background:#e0dfe3"></div><div class="a" style="left:3px;top:228.97px;width:13.3px;height:0.7px;background:#d6d5d9"></div><div class="a" style="left:17px;top:228.97px;width:1060.5px;height:0.7px;background:#e0dfe3"></div><div class="a" style="left:3px;top:243.14px;width:13.3px;height:0.7px;background:#d6d5d9"></div><div class="a" style="left:17px;top:243.14px;width:1060.5px;height:0.7px;background:#e0dfe3"></div><div class="a" style="left:3px;top:257.30px;width:13.3px;height:0.7px;background:#d6d5d9"></div><div class="a" style="left:17px;top:257.30px;width:1060.5px;height:0.7px;background:#e0dfe3"></div><div class="a" style="left:3px;top:271.47px;width:13.3px;height:0.7px;background:#d6d5d9"></div><div class="a" style="left:17px;top:271.47px;width:1060.5px;height:0.7px;background:#e0dfe3"></div><div class="a" style="left:3px;top:285.63px;width:13.3px;height:0.7px;background:#d6d5d9"></div><div class="a" style="left:17px;top:285.63px;width:1060.5px;height:0.7px;background:#e0dfe3"></div><div class="a" style="left:3px;top:299.80px;width:13.3px;height:0.7px;background:#d6d5d9"></div><div class="a" style="left:17px;top:299.80px;width:1060.5px;height:0.7px;background:#e0dfe3"></div><div class="a" style="left:3px;top:313.96px;width:13.3px;height:0.7px;background:#d6d5d9"></div><div class="a" style="left:17px;top:313.96px;width:1060.5px;height:0.7px;background:#e0dfe3"></div><div class="a" style="left:3px;top:328.13px;width:13.3px;height:0.7px;background:#d6d5d9"></div><div class="a" style="left:17px;top:328.13px;width:1060.5px;height:0.7px;background:#e0dfe3"></div><div class="a" style="left:3px;top:342.29px;width:13.3px;height:0.7px;background:#d6d5d9"></div><div class="a" style="left:17px;top:342.29px;width:1060.5px;height:0.7px;background:#e0dfe3"></div><div class="a" style="left:3px;top:356.46px;width:13.3px;height:0.7px;background:#d6d5d9"></div><div class="a" style="left:17px;top:356.46px;width:1060.5px;height:0.7px;background:#e0dfe3"></div><div class="a" style="left:3px;top:370.62px;width:13.3px;height:0.7px;background:#d6d5d9"></div><div class="a" style="left:17px;top:370.62px;width:1060.5px;height:0.7px;background:#e0dfe3"></div><div class="a" style="left:3px;top:384.79px;width:13.3px;height:0.7px;background:#d6d5d9"></div><div class="a" style="left:17px;top:384.79px;width:1060.5px;height:0.7px;background:#e0dfe3"></div><div class="a" style="left:3px;top:398.95px;width:13.3px;height:0.7px;background:#d6d5d9"></div><div class="a" style="left:17px;top:398.95px;width:1060.5px;height:0.7px;background:#e0dfe3"></div><div class="a" style="left:3px;top:413.12px;width:13.3px;height:0.7px;background:#d6d5d9"></div><div class="a" style="left:17px;top:413.12px;width:1060.5px;height:0.7px;background:#e0dfe3"></div><div class="a" style="left:3px;top:427.28px;width:13.3px;height:0.7px;background:#d6d5d9"></div><div class="a" style="left:17px;top:427.28px;width:1060.5px;height:0.7px;background:#e0dfe3"></div><div class="a" style="left:3px;top:441.45px;width:13.3px;height:0.7px;background:#d6d5d9"></div><div class="a" style="left:17px;top:441.45px;width:1060.5px;height:0.7px;background:#e0dfe3"></div><div class="a" style="left:3px;top:455.61px;width:13.3px;height:0.7px;background:#d6d5d9"></div><div class="a" style="left:17px;top:455.61px;width:1060.5px;height:0.7px;background:#e0dfe3"></div><div class="a" style="left:3px;top:469.78px;width:13.3px;height:0.7px;background:#d6d5d9"></div><div class="a" style="left:17px;top:469.78px;width:1060.5px;height:0.7px;background:#e0dfe3"></div><div class="a" style="left:3px;top:483.94px;width:13.3px;height:0.7px;background:#d6d5d9"></div><div class="a" style="left:17px;top:483.94px;width:1060.5px;height:0.7px;background:#e0dfe3"></div><div class="a" style="left:3px;top:498.11px;width:13.3px;height:0.7px;background:#d6d5d9"></div><div class="a" style="left:17px;top:498.11px;width:1060.5px;height:0.7px;background:#e0dfe3"></div><div class="a" style="left:3px;top:512.27px;width:13.3px;height:0.7px;background:#d6d5d9"></div><div class="a" style="left:17px;top:512.27px;width:1060.5px;height:0.7px;background:#e0dfe3"></div><div class="a" style="left:3px;top:526.44px;width:13.3px;height:0.7px;background:#d6d5d9"></div><div class="a" style="left:17px;top:526.44px;width:1060.5px;height:0.7px;background:#e0dfe3"></div><div class="a" style="left:3px;top:540.60px;width:13.3px;height:0.7px;background:#d6d5d9"></div><div class="a" style="left:17px;top:540.60px;width:1060.5px;height:0.7px;background:#e0dfe3"></div><div class="a" style="left:3px;top:554.77px;width:13.3px;height:0.7px;background:#d6d5d9"></div><div class="a" style="left:17px;top:554.77px;width:1060.5px;height:0.7px;background:#e0dfe3"></div><div class="a" style="left:3px;top:568.93px;width:13.3px;height:0.7px;background:#d6d5d9"></div><div class="a" style="left:17px;top:568.93px;width:1060.5px;height:0.7px;background:#e0dfe3"></div><div class="a" style="left:3px;top:583.10px;width:13.3px;height:0.7px;background:#d6d5d9"></div><div class="a" style="left:17px;top:583.10px;width:1060.5px;height:0.7px;background:#e0dfe3"></div><div class="a" style="left:3px;top:597.26px;width:13.3px;height:0.7px;background:#d6d5d9"></div><div class="a" style="left:17px;top:597.26px;width:1060.5px;height:0.7px;background:#e0dfe3"></div><div class="a" style="left:3px;top:611.43px;width:13.3px;height:0.7px;background:#d6d5d9"></div><div class="a" style="left:17px;top:611.43px;width:1060.5px;height:0.7px;background:#e0dfe3"></div><div class="a" style="left:3px;top:625.59px;width:13.3px;height:0.7px;background:#d6d5d9"></div><div class="a" style="left:17px;top:625.59px;width:1060.5px;height:0.7px;background:#e0dfe3"></div><div class="a" style="left:3px;top:639.76px;width:13.3px;height:0.7px;background:#d6d5d9"></div><div class="a" style="left:17px;top:639.76px;width:1060.5px;height:0.7px;background:#e0dfe3"></div><div class="a" style="left:3px;top:653.92px;width:13.3px;height:0.7px;background:#d6d5d9"></div><div class="a" style="left:17px;top:653.92px;width:1060.5px;height:0.7px;background:#e0dfe3"></div><div class="a" style="left:3px;top:668.09px;width:13.3px;height:0.7px;background:#d6d5d9"></div><div class="a" style="left:17px;top:668.09px;width:1060.5px;height:0.7px;background:#e0dfe3"></div><div class="a" style="left:3px;top:682.25px;width:13.3px;height:0.7px;background:#d6d5d9"></div><div class="a" style="left:17px;top:682.25px;width:1060.5px;height:0.7px;background:#e0dfe3"></div><div class="a" style="left:3px;top:696.42px;width:13.3px;height:0.7px;background:#d6d5d9"></div><div class="a" style="left:17px;top:696.42px;width:1060.5px;height:0.7px;background:#e0dfe3"></div><div class="a" style="left:202.65px;top:158.8px;width:0.7px;height:542.6px;background:#e9e8ec"></div><div class="a" style="left:256.05px;top:158.8px;width:0.7px;height:542.6px;background:#e9e8ec"></div><div class="a" style="left:309.45px;top:158.8px;width:0.7px;height:542.6px;background:#e9e8ec"></div><div class="a" style="left:362.85px;top:158.8px;width:0.7px;height:542.6px;background:#e9e8ec"></div><div class="a" style="left:416.25px;top:158.8px;width:0.7px;height:542.6px;background:#e9e8ec"></div><div class="a" style="left:469.65px;top:158.8px;width:0.7px;height:542.6px;background:#e9e8ec"></div><div class="a" style="left:523.05px;top:158.8px;width:0.7px;height:542.6px;background:#e9e8ec"></div><div class="a" style="left:576.45px;top:158.8px;width:0.7px;height:542.6px;background:#e9e8ec"></div><div class="a" style="left:629.85px;top:158.8px;width:0.7px;height:542.6px;background:#e9e8ec"></div><div class="a" style="left:683.25px;top:158.8px;width:0.7px;height:542.6px;background:#e9e8ec"></div><div class="a" style="left:736.65px;top:158.8px;width:0.7px;height:542.6px;background:#e9e8ec"></div><div class="a" style="left:790.05px;top:158.8px;width:0.7px;height:542.6px;background:#e9e8ec"></div><div class="a" style="left:843.45px;top:158.8px;width:0.7px;height:542.6px;background:#e9e8ec"></div><div class="a" style="left:896.85px;top:158.8px;width:0.7px;height:542.6px;background:#e9e8ec"></div><div class="a" style="left:950.25px;top:158.8px;width:0.7px;height:542.6px;background:#e9e8ec"></div><div class="a" style="left:1003.65px;top:158.8px;width:0.7px;height:542.6px;background:#e9e8ec"></div><div class="a" style="left:1057.05px;top:158.8px;width:0.7px;height:542.6px;background:#e9e8ec"></div>
<div class="t" style="left:6.24px;top:161.80px;font-size:10px;color:#333;transform:scaleX(0.9200);-webkit-text-stroke:0.1px currentColor;">1</div>
<div class="t" style="left:6.24px;top:175.96px;font-size:10px;color:#333;transform:scaleX(0.9200);-webkit-text-stroke:0.1px currentColor;">2</div>
<div class="t" style="left:6.24px;top:190.13px;font-size:10px;color:#333;transform:scaleX(0.9200);-webkit-text-stroke:0.1px currentColor;">3</div>
<div class="t" style="left:6.24px;top:204.29px;font-size:10px;color:#333;transform:scaleX(0.9200);-webkit-text-stroke:0.1px currentColor;">4</div>
<div class="t" style="left:6.24px;top:218.46px;font-size:10px;color:#333;transform:scaleX(0.9200);-webkit-text-stroke:0.1px currentColor;">5</div>
<div class="t" style="left:6.24px;top:232.62px;font-size:10px;color:#333;transform:scaleX(0.9200);-webkit-text-stroke:0.1px currentColor;">6</div>
<div class="t" style="left:6.24px;top:246.79px;font-size:10px;color:#333;transform:scaleX(0.9200);-webkit-text-stroke:0.1px currentColor;">7</div>
<div class="t" style="left:6.24px;top:260.95px;font-size:10px;color:#333;transform:scaleX(0.9200);-webkit-text-stroke:0.1px currentColor;">8</div>
<div class="t" style="left:6.24px;top:275.12px;font-size:10px;color:#333;transform:scaleX(0.9200);-webkit-text-stroke:0.1px currentColor;">9</div>
<div class="t" style="left:3.68px;top:289.28px;font-size:10px;color:#333;transform:scaleX(0.9200);-webkit-text-stroke:0.1px currentColor;">10</div>
<div class="t" style="left:4.02px;top:303.45px;font-size:10px;color:#333;transform:scaleX(0.9200);-webkit-text-stroke:0.1px currentColor;">11</div>
<div class="t" style="left:3.68px;top:317.61px;font-size:10px;color:#333;transform:scaleX(0.9200);-webkit-text-stroke:0.1px currentColor;">12</div>
<div class="t" style="left:3.68px;top:331.78px;font-size:10px;color:#333;transform:scaleX(0.9200);-webkit-text-stroke:0.1px currentColor;">13</div>
<div class="t" style="left:3.68px;top:345.94px;font-size:10px;color:#333;transform:scaleX(0.9200);-webkit-text-stroke:0.1px currentColor;">14</div>
<div class="t" style="left:3.68px;top:360.11px;font-size:10px;color:#333;transform:scaleX(0.9200);-webkit-text-stroke:0.1px currentColor;">15</div>
<div class="t" style="left:3.68px;top:374.27px;font-size:10px;color:#333;transform:scaleX(0.9200);-webkit-text-stroke:0.1px currentColor;">16</div>
<div class="t" style="left:3.68px;top:388.44px;font-size:10px;color:#333;transform:scaleX(0.9200);-webkit-text-stroke:0.1px currentColor;">17</div>
<div class="t" style="left:3.68px;top:402.60px;font-size:10px;color:#333;transform:scaleX(0.9200);-webkit-text-stroke:0.1px currentColor;">18</div>
<div class="t" style="left:3.68px;top:416.77px;font-size:10px;color:#333;transform:scaleX(0.9200);-webkit-text-stroke:0.1px currentColor;">19</div>
<div class="t" style="left:3.68px;top:430.93px;font-size:10px;color:#333;transform:scaleX(0.9200);-webkit-text-stroke:0.1px currentColor;">20</div>
<div class="t" style="left:3.68px;top:445.10px;font-size:10px;color:#333;transform:scaleX(0.9200);-webkit-text-stroke:0.1px currentColor;">21</div>
<div class="t" style="left:3.68px;top:459.26px;font-size:10px;color:#333;transform:scaleX(0.9200);-webkit-text-stroke:0.1px currentColor;">22</div>
<div class="t" style="left:3.68px;top:473.43px;font-size:10px;color:#333;transform:scaleX(0.9200);-webkit-text-stroke:0.1px currentColor;">23</div>
<div class="t" style="left:3.68px;top:487.59px;font-size:10px;color:#333;transform:scaleX(0.9200);-webkit-text-stroke:0.1px currentColor;">24</div>
<div class="t" style="left:3.68px;top:501.76px;font-size:10px;color:#333;transform:scaleX(0.9200);-webkit-text-stroke:0.1px currentColor;">25</div>
<div class="t" style="left:3.68px;top:515.92px;font-size:10px;color:#333;transform:scaleX(0.9200);-webkit-text-stroke:0.1px currentColor;">26</div>
<div class="t" style="left:3.68px;top:530.09px;font-size:10px;color:#333;transform:scaleX(0.9200);-webkit-text-stroke:0.1px currentColor;">27</div>
<div class="t" style="left:3.68px;top:544.25px;font-size:10px;color:#333;transform:scaleX(0.9200);-webkit-text-stroke:0.1px currentColor;">28</div>
<div class="t" style="left:3.68px;top:558.42px;font-size:10px;color:#333;transform:scaleX(0.9200);-webkit-text-stroke:0.1px currentColor;">29</div>
<div class="t" style="left:3.68px;top:572.58px;font-size:10px;color:#333;transform:scaleX(0.9200);-webkit-text-stroke:0.1px currentColor;">30</div>
<div class="t" style="left:3.68px;top:586.75px;font-size:10px;color:#333;transform:scaleX(0.9200);-webkit-text-stroke:0.1px currentColor;">31</div>
<div class="t" style="left:3.68px;top:600.91px;font-size:10px;color:#333;transform:scaleX(0.9200);-webkit-text-stroke:0.1px currentColor;">32</div>
<div class="t" style="left:3.68px;top:615.08px;font-size:10px;color:#333;transform:scaleX(0.9200);-webkit-text-stroke:0.1px currentColor;">33</div>
<div class="t" style="left:3.68px;top:629.24px;font-size:10px;color:#333;transform:scaleX(0.9200);-webkit-text-stroke:0.1px currentColor;">34</div>
<div class="t" style="left:3.68px;top:643.41px;font-size:10px;color:#333;transform:scaleX(0.9200);-webkit-text-stroke:0.1px currentColor;">35</div>
<div class="t" style="left:3.68px;top:657.57px;font-size:10px;color:#333;transform:scaleX(0.9200);-webkit-text-stroke:0.1px currentColor;">36</div>
<div class="t" style="left:3.68px;top:671.74px;font-size:10px;color:#333;transform:scaleX(0.9200);-webkit-text-stroke:0.1px currentColor;">37</div>
<div class="t" style="left:3.68px;top:685.90px;font-size:10px;color:#333;transform:scaleX(0.9200);-webkit-text-stroke:0.1px currentColor;">38</div>
<div class="a" style="left:1077.2px;top:158.5px;width:0.8px;height:543px;background:#b0afb3;"></div>
<div class="a" style="left:3px;top:701.2px;width:1074.5px;height:0.8px;background:#b8b7bb;"></div>
<div class="t" style="left:18.70px;top:161.44px;font-size:9.7px;color:#2d2d2d;transform:scaleX(0.9321);">Risiko</div>
<div class="t" style="left:18.70px;top:175.61px;font-size:9.7px;color:#2d2d2d;transform:scaleX(0.9724);">zu wenig automatisierte Tests</div>
<div class="t" style="left:18.70px;top:189.77px;font-size:9.7px;color:#2d2d2d;transform:scaleX(0.9183);">Inselwissen zu XY</div>
<div class="t" style="left:18.70px;top:203.94px;font-size:9.7px;color:#2d2d2d;transform:scaleX(0.9637);">Architektur nicht für hohe Lasten ausgelegt</div>
<div class="t" style="left:18.70px;top:218.10px;font-size:9.7px;color:#2d2d2d;transform:scaleX(0.9425);">kein Fachwissen Datenbank</div>
<div class="t" style="left:18.70px;top:232.27px;font-size:9.7px;color:#2d2d2d;transform:scaleX(0.9593);">Sicherheitslücke bei Zugriff Deep-Links</div>
<div class="t" style="left:204.50px;top:161.44px;font-size:9.7px;color:#2d2d2d;transform:scaleX(0.9192);">Höhe</div>
<div class="t" style="left:258.30px;top:161.44px;font-size:9.7px;color:#2d2d2d;transform:scaleX(0.9480);">Wahrscheinl</div>
<div class="t" style="left:311.00px;top:161.44px;font-size:9.7px;color:#2d2d2d;transform:scaleX(0.9615);">Gewichtung</div>
<div class="a" style="left:203.5px;top:186.48px;width:160px;height:0.7px;background:#d5d0e6;"></div>
<div class="a" style="left:203.5px;top:200.645px;width:160px;height:0.7px;background:#d5d0e6;"></div>
<div class="a" style="left:203.5px;top:214.81px;width:160px;height:0.7px;background:#d5d0e6;"></div>
<div class="a" style="left:203.5px;top:228.975px;width:160px;height:0.7px;background:#d5d0e6;"></div>
<div class="t" style="left:249.38px;top:175.61px;font-size:9.7px;color:#2d2d2d;transform:scaleX(0.9500);">1</div>
<div class="t" style="left:302.88px;top:175.61px;font-size:9.7px;color:#2d2d2d;transform:scaleX(0.9500);">1</div>
<div class="t" style="left:356.38px;top:175.61px;font-size:9.7px;color:#2d2d2d;transform:scaleX(0.9500);">1</div>
<div class="t" style="left:249.38px;top:189.77px;font-size:9.7px;color:#2d2d2d;transform:scaleX(0.9500);">3</div>
<div class="t" style="left:302.88px;top:189.77px;font-size:9.7px;color:#2d2d2d;transform:scaleX(0.9500);">4</div>
<div class="t" style="left:351.26px;top:189.77px;font-size:9.7px;color:#2d2d2d;transform:scaleX(0.9500);">12</div>
<div class="t" style="left:249.38px;top:203.94px;font-size:9.7px;color:#2d2d2d;transform:scaleX(0.9500);">4</div>
<div class="t" style="left:302.88px;top:203.94px;font-size:9.7px;color:#2d2d2d;transform:scaleX(0.9500);">2</div>
<div class="t" style="left:356.38px;top:203.94px;font-size:9.7px;color:#2d2d2d;transform:scaleX(0.9500);">8</div>
<div class="t" style="left:249.38px;top:218.10px;font-size:9.7px;color:#2d2d2d;transform:scaleX(0.9500);">5</div>
<div class="t" style="left:302.88px;top:218.10px;font-size:9.7px;color:#2d2d2d;transform:scaleX(0.9500);">2</div>
<div class="t" style="left:351.26px;top:218.10px;font-size:9.7px;color:#2d2d2d;transform:scaleX(0.9500);">10</div>
<div class="t" style="left:249.38px;top:232.27px;font-size:9.7px;color:#2d2d2d;transform:scaleX(0.9500);">5</div>
<div class="t" style="left:302.88px;top:232.27px;font-size:9.7px;color:#2d2d2d;transform:scaleX(0.9500);">5</div>
<div class="t" style="left:351.26px;top:232.27px;font-size:9.7px;color:#2d2d2d;transform:scaleX(0.9500);">25</div>
<div class="a" style="left:203px;top:172.065px;width:53.6px;height:72.02500000000002px;border:1.2px solid #7d5aa6;box-sizing:border-box;"></div>
<div class="a" style="left:256.6px;top:172.065px;width:107px;height:72.02500000000002px;border:1.2px solid #3a6eb0;box-sizing:border-box;"></div>
<div class="a" style="left:201.4px;top:171.065px;width:3.2px;height:3.2px;background:#7d5aa6;"></div>
<div class="a" style="left:255.00000000000003px;top:171.065px;width:3.2px;height:3.2px;background:#7d5aa6;"></div>
<div class="a" style="left:201.4px;top:241.89000000000001px;width:3.2px;height:3.2px;background:#7d5aa6;"></div>
<div class="a" style="left:255.00000000000003px;top:241.89000000000001px;width:3.2px;height:3.2px;background:#7d5aa6;"></div>
<div class="a" style="left:362.0px;top:171.065px;width:3.2px;height:3.2px;background:#3a6eb0;"></div>
<div class="a" style="left:362.0px;top:241.89000000000001px;width:3.2px;height:3.2px;background:#3a6eb0;"></div>
<div class="t" style="left:40.74px;top:670.10px;font-size:9px;color:#d0cfd3;transform:scaleX(0.9500);">20</div>
<div class="a" style="left:3px;top:701.8px;width:1089.5px;height:15.2px;background:#e6e5e8;"></div>
<div class="a" style="left:66.6px;top:701.2px;width:50.6px;height:15.8px;background:#f3f2f5;"></div>
<div class="a" style="left:66.2px;top:701.2px;width:0.8px;height:15.8px;background:#b5b4b8;"></div>
<div class="a" style="left:117px;top:701.2px;width:0.8px;height:15.8px;background:#b5b4b8;"></div>
<svg style="left:17.5px;top:707.5px" width="4" height="6" viewBox="0 0 4 6"><path d="M4 0v6L0 3z" fill="#c8c8cb"/></svg>
<svg style="left:37px;top:707.5px" width="4" height="6" viewBox="0 0 4 6"><path d="M0 0v6l4-3z" fill="#c8c8cb"/></svg>
<div class="t" style="left:75.10px;top:706.32px;font-size:10px;color:#2f6b4a;font-weight:700;transform:scaleX(0.8605);">Tabelle1</div>
<svg style="left:138.8px;top:705.5px" width="11" height="11" viewBox="0 0 11 11"><circle cx="5.5" cy="5.5" r="4.8" fill="none" stroke="#555" stroke-width="0.9"/><path d="M5.5 2.8v5.4M2.8 5.5h5.4" stroke="#555" stroke-width="1"/></svg>
<svg style="left:655px;top:706px" width="2" height="9" viewBox="0 0 2 9"><circle cx="1" cy="1" r="0.6" fill="#aaa"/><circle cx="1" cy="4.5" r="0.6" fill="#aaa"/><circle cx="1" cy="8" r="0.6" fill="#aaa"/></svg>
<div class="a" style="left:666.5px;top:706px;width:411px;height:11px;background:#dddce0;"></div>
<div class="a" style="left:666.5px;top:706px;width:9.8px;height:11px;background:#f5f4f7;border:0.7px solid #c9c8cc;box-sizing:border-box;"></div>
<div class="a" style="left:676.2px;top:706px;width:368.5px;height:11px;background:#f5f4f7;border:0.7px solid #c9c8cc;box-sizing:border-box;"></div>
<div class="a" style="left:1067.6px;top:706px;width:9.8px;height:11px;background:#f5f4f7;border:0.7px solid #c9c8cc;box-sizing:border-box;"></div>
<svg style="left:669.5px;top:708.5px" width="4" height="6" viewBox="0 0 4 6"><path d="M4 0v6L0 3z" fill="#555"/></svg>
<svg style="left:1071px;top:708.5px" width="4" height="6" viewBox="0 0 4 6"><path d="M0 0v6l4-3z" fill="#555"/></svg>
<svg style="left:0;top:0" width="1280" height="720" viewBox="0 0 1280 720"><rect x="417" y="264.4" width="320" height="305.0" fill="#f3f2f5" stroke="#c9c8cc" stroke-width="0.9"/><line x1="433.4" y1="546.7" x2="724.04" y2="546.7" stroke="#d0cfd3" stroke-width="0.9"/><line x1="433.4" y1="546.7" x2="433.4" y2="297.94000000000005" stroke="#e0dfe3" stroke-width="0.9"/><rect x="433.4" y="339.40000000000003" width="121.1" height="103.65" fill="#f5f000"/><rect x="554.5" y="339.40000000000003" width="121.1" height="103.65" fill="#f20000"/><rect x="433.4" y="443.05000000000007" width="121.1" height="103.65" fill="#92d050"/><rect x="554.5" y="443.05000000000007" width="121.1" height="103.65" fill="#f5f000"/><line x1="433.4" y1="546.7" x2="433.4" y2="339.40000000000003" stroke="#141414" stroke-width="1"/><line x1="433.4" y1="546.7" x2="675.5999999999999" y2="546.7" stroke="#141414" stroke-width="1"/><line x1="481.84" y1="546.7" x2="481.84" y2="339.40000000000003" stroke="#141414" stroke-width="1"/><line x1="433.4" y1="504.6" x2="675.5999999999999" y2="504.6" stroke="#141414" stroke-width="1"/><line x1="530.28" y1="546.7" x2="530.28" y2="339.40000000000003" stroke="#141414" stroke-width="1"/><line x1="433.4" y1="463.78000000000003" x2="675.5999999999999" y2="463.78000000000003" stroke="#141414" stroke-width="1"/><line x1="579.2" y1="546.7" x2="579.2" y2="339.40000000000003" stroke="#141414" stroke-width="1"/><line x1="433.4" y1="422.32000000000005" x2="675.5999999999999" y2="422.32000000000005" stroke="#141414" stroke-width="1"/><line x1="627.16" y1="546.7" x2="627.16" y2="339.40000000000003" stroke="#141414" stroke-width="1"/><line x1="433.4" y1="380.86" x2="675.5999999999999" y2="380.86" stroke="#141414" stroke-width="1"/><line x1="675.5999999999999" y1="546.7" x2="675.5999999999999" y2="339.40000000000003" stroke="#141414" stroke-width="1"/><line x1="433.4" y1="339.40000000000003" x2="675.5999999999999" y2="339.40000000000003" stroke="#141414" stroke-width="1"/><circle cx="481.84" cy="504.6" r="6.00" fill="#5b9bd5" fill-opacity="0.75"/><circle cx="579.2" cy="380.86" r="20.78" fill="#5b9bd5" fill-opacity="0.75"/><circle cx="627.16" cy="463.78000000000003" r="16.97" fill="#5b9bd5" fill-opacity="0.75"/><circle cx="675.5999999999999" cy="463.78000000000003" r="18.97" fill="#5b9bd5" fill-opacity="0.75"/><circle cx="675.5999999999999" cy="339.40000000000003" r="30.00" fill="#5b9bd5" fill-opacity="0.75"/><circle cx="417" cy="264.4" r="3.1" fill="#fbfbfb" stroke="#8a8a8c" stroke-width="0.9"/><circle cx="577.0" cy="264.4" r="3.1" fill="#fbfbfb" stroke="#8a8a8c" stroke-width="0.9"/><circle cx="737" cy="264.4" r="3.1" fill="#fbfbfb" stroke="#8a8a8c" stroke-width="0.9"/><circle cx="417" cy="416.9" r="3.1" fill="#fbfbfb" stroke="#8a8a8c" stroke-width="0.9"/><circle cx="737" cy="416.9" r="3.1" fill="#fbfbfb" stroke="#8a8a8c" stroke-width="0.9"/><circle cx="417" cy="569.4" r="3.1" fill="#fbfbfb" stroke="#8a8a8c" stroke-width="0.9"/><circle cx="577.0" cy="569.4" r="3.1" fill="#fbfbfb" stroke="#8a8a8c" stroke-width="0.9"/><circle cx="737" cy="569.4" r="3.1" fill="#fbfbfb" stroke="#8a8a8c" stroke-width="0.9"/><path d="M738 267.5L746.5 259" stroke="#555" stroke-width="1"/><path d="M736.5 264.5v4.5h4.5z" fill="#fff" stroke="#444" stroke-width="0.8"/><path d="M743.5 257.5h4.5v4.5z" fill="#fff" stroke="#444" stroke-width="0.8"/><rect x="745.3" y="263.3" width="18.5" height="19.5" fill="#f6f6f8" stroke="#c5c4c8" stroke-width="0.8"/><rect x="745.3" y="290.1" width="18.5" height="19.5" fill="#f6f6f8" stroke="#c5c4c8" stroke-width="0.8"/><rect x="745.3" y="317.0" width="18.5" height="19.5" fill="#f6f6f8" stroke="#c5c4c8" stroke-width="0.8"/><path d="M754.6 268.3v9.4M749.9 273h9.4" stroke="#4f9e7f" stroke-width="2.2"/><path d="M761.5 293.6l-6.2 7.3" stroke="#6a6a6c" stroke-width="1.2" stroke-linecap="round"/><path d="M755.8 300.3c-2.5-.3-4.5 1.2-5.2 3.4l-.9 1.8c2.8.2 5.3-.6 6.6-2.6z" fill="#4a78b8"/><path d="M749.2 321.3h10.8l-4.2 5.2v5.6h-2.4v-5.6z" fill="#6d6d6f"/></svg>
<div class="t" style="left:540.70px;top:272.98px;font-size:11.5px;color:#595959;transform:scaleX(1.0122);">Diagrammtitel</div>
<div class="t" style="left:421.48px;top:543.09px;font-size:8px;color:#595959;transform:scaleX(0.9500);">0</div>
<div class="t" style="left:431.28px;top:555.09px;font-size:8px;color:#595959;transform:scaleX(0.9500);">0</div>
<div class="t" style="left:421.48px;top:500.99px;font-size:8px;color:#595959;transform:scaleX(0.9500);">1</div>
<div class="t" style="left:479.72px;top:555.09px;font-size:8px;color:#595959;transform:scaleX(0.9500);">1</div>
<div class="t" style="left:421.48px;top:460.17px;font-size:8px;color:#595959;transform:scaleX(0.9500);">2</div>
<div class="t" style="left:528.16px;top:555.09px;font-size:8px;color:#595959;transform:scaleX(0.9500);">2</div>
<div class="t" style="left:421.48px;top:418.71px;font-size:8px;color:#595959;transform:scaleX(0.9500);">3</div>
<div class="t" style="left:577.08px;top:555.09px;font-size:8px;color:#595959;transform:scaleX(0.9500);">3</div>
<div class="t" style="left:421.48px;top:377.25px;font-size:8px;color:#595959;transform:scaleX(0.9500);">4</div>
<div class="t" style="left:625.04px;top:555.09px;font-size:8px;color:#595959;transform:scaleX(0.9500);">4</div>
<div class="t" style="left:421.48px;top:335.79px;font-size:8px;color:#595959;transform:scaleX(0.9500);">5</div>
<div class="t" style="left:673.48px;top:555.09px;font-size:8px;color:#595959;transform:scaleX(0.9500);">5</div>
<div class="t" style="left:421.48px;top:294.33px;font-size:8px;color:#595959;transform:scaleX(0.9500);">6</div>
<div class="t" style="left:721.92px;top:555.09px;font-size:8px;color:#595959;transform:scaleX(0.9500);">6</div>
<div class="a" style="left:1077.5px;top:137.5px;width:15px;height:9px;background:#e9e8eb;"></div>
<div class="a" style="left:1077.5px;top:146px;width:15px;height:555.5px;background:#f3f2f5;"></div>
<div class="a" style="left:1080.3px;top:146.2px;width:9.4px;height:555px;background:#dddce0;"></div>
<div class="a" style="left:1080.3px;top:146.2px;width:9.400000000000091px;height:10.5px;background:#f6f5f8;border:0.8px solid #c3c2c6;box-sizing:border-box;"></div>
<div class="a" style="left:1080.3px;top:156.2px;width:9.400000000000091px;height:520.5px;background:#f6f5f8;border:0.8px solid #c3c2c6;box-sizing:border-box;"></div>
<div class="a" style="left:1080.3px;top:690.8px;width:9.400000000000091px;height:10.400000000000091px;background:#f6f5f8;border:0.8px solid #c3c2c6;box-sizing:border-box;"></div>
<svg style="left:1082.8px;top:150px" width="4.4" height="2.6" viewBox="0 0 4.4 2.6"><path d="M0 2.6h4.4L2.2 0z" fill="#555"/></svg>
<svg style="left:1082.8px;top:694.8px" width="4.4" height="2.6" viewBox="0 0 4.4 2.6"><path d="M0 0h4.4L2.2 2.6z" fill="#555"/></svg>
<div class="a" style="left:1092.5px;top:137.5px;width:184.5px;height:579.5px;background:#e8e7ea;"></div>
<div class="a" style="left:1092px;top:145px;width:0.8px;height:572px;background:#c3c2c6;"></div>
<div class="t" style="left:1101.70px;top:155.22px;font-size:14.5px;color:#5f8f74;transform:scaleX(0.9415);-webkit-text-stroke:0;">Diagrammbereich f...</div>
<svg style="left:1236px;top:159.5px" width="6" height="4" viewBox="0 0 6 4"><path d="M0 0h6L3 3.6z" fill="#666"/></svg>
<svg style="left:1262.5px;top:157.5px" width="8" height="8" viewBox="0 0 8 8"><path d="M0.8 0.8l6.4 6.4M7.2 0.8L0.8 7.2" stroke="#555" stroke-width="1.1"/></svg>
<div class="t" style="left:1104.80px;top:177.40px;font-size:9px;color:#2f6f4c;font-weight:700;transform:scaleX(0.8815);">Diagrammoptionen</div>
<svg style="left:1181px;top:179px" width="7" height="5" viewBox="0 0 7 5"><path d="M0 0h7L3.5 5z" fill="#555"/></svg>
<div class="t" style="left:1200.50px;top:177.40px;font-size:9px;color:#3f3f3f;transform:scaleX(0.8913);">Textoptionen</div>
<svg style="left:1104px;top:195px" width="19" height="19" viewBox="0 0 19 19"><path d="M1 10.5L7 4.5l6 6-6 6z" fill="none" stroke="#2e7050" stroke-width="0.9"/><circle cx="7" cy="3" r="1.4" fill="none" stroke="#2e7050" stroke-width="0.8"/><path d="M7 3v5" stroke="#1e5f40" stroke-width="0.9"/><path d="M12.2 6.6c1.6.3 3 1 3.9 2 .9 1.3.6 2.9-.2 4.3l-1 3-1.1-4.6-1.4-1.4z" fill="#1e6b45"/></svg>
<svg style="left:1132.5px;top:195px" width="17" height="19" viewBox="0 0 17 19"><path d="M8 1.8l6.4 4.7-2.4 7.6H4L1.6 6.5z" fill="none" stroke="#6a6a6c" stroke-width="0.9"/><path d="M4 14.6h8" stroke="#6a6a6c" stroke-width="1.5"/><path d="M3.7 14.8l-.6 2.2M12.3 14.8l.6 2.2" stroke="#b0b0b3" stroke-width="0.7"/></svg>
<svg style="left:1160px;top:195px" width="16" height="19" viewBox="0 0 16 19"><path d="M3.5 4.2h10M3.5 2.7v3M13.5 2.7v3" stroke="#8a8a8c" stroke-width="0.7"/><path d="M1.6 7v10M0.3 7h2.6M0.3 17h2.6" stroke="#9a9a9c" stroke-width="0.7"/><rect x="4" y="7" width="9.2" height="10" fill="#68686a"/><path d="M8.6 8.5v2.5M8.6 13v2.5M5.3 12h2.2M9.7 12h2.2" stroke="#f0f0f0" stroke-width="0.9"/><circle cx="8.6" cy="12" r="0.7" fill="#f0f0f0"/></svg>
<svg style="left:1100px;top:219px" width="175" height="10" viewBox="0 0 175 10"><path d="M2 7.3h6.5l4.3-4.3 4.3 4.3H173" fill="none" stroke="#d3d2d6" stroke-width="1"/></svg>
<div class="a" style="left:1262.8px;top:230.8px;width:9.8px;height:476px;background:#d6d5d9;"></div>
<div class="a" style="left:1262.8px;top:230.8px;width:9.799999999999955px;height:10.899999999999977px;background:#f7f6f9;border:0.8px solid #c3c2c6;box-sizing:border-box;"></div>
<div class="a" style="left:1262.8px;top:241.2px;width:9.799999999999955px;height:434.3px;background:#f7f6f9;border:0.8px solid #c3c2c6;box-sizing:border-box;"></div>
<div class="a" style="left:1262.8px;top:696.3px;width:9.799999999999955px;height:10.0px;background:#f7f6f9;border:0.8px solid #c3c2c6;box-sizing:border-box;"></div>
<svg style="left:1265.5px;top:235px" width="4.4" height="2.6" viewBox="0 0 4.4 2.6"><path d="M0 2.6h4.4L2.2 0z" fill="#555"/></svg>
<svg style="left:1265.5px;top:700.0999999999999px" width="4.4" height="2.6" viewBox="0 0 4.4 2.6"><path d="M0 0h4.4L2.2 2.6z" fill="#555"/></svg>
<svg style="left:1105.8px;top:233.8px" width="5" height="5" viewBox="0 0 5 5"><path d="M5 0v5H0z" fill="#333"/></svg>
<div class="t" style="left:1116.30px;top:232.90px;font-size:9px;color:#2f6f4c;font-weight:700;transform:scaleX(0.8308);">Füllung</div>
<svg style="left:1115.8px;top:252px" width="10" height="10" viewBox="0 0 10 10"><circle cx="5" cy="5" r="4.1" fill="#f7f7f9" stroke="#a9a9ac" stroke-width="0.8"/></svg>
<div class="t" style="left:1128.70px;top:252.90px;font-size:9px;color:#3f3f3f;transform:scaleX(0.8665);"><span style="text-decoration:underline;text-underline-offset:1.5px">K</span>eine Füllung</div>
<svg style="left:1115.8px;top:267.6px" width="10" height="10" viewBox="0 0 10 10"><circle cx="5" cy="5" r="4.1" fill="#f7f7f9" stroke="#a9a9ac" stroke-width="0.8"/></svg>
<div class="t" style="left:1128.70px;top:268.50px;font-size:9px;color:#3f3f3f;transform:scaleX(0.8725);">Einfarbige <span style="text-decoration:underline;text-underline-offset:1.5px">F</span>üllung</div>
<svg style="left:1115.8px;top:283.2px" width="10" height="10" viewBox="0 0 10 10"><circle cx="5" cy="5" r="4.1" fill="#f7f7f9" stroke="#a9a9ac" stroke-width="0.8"/></svg>
<div class="t" style="left:1128.70px;top:284.10px;font-size:9px;color:#3f3f3f;transform:scaleX(0.8631);">Farb<span style="text-decoration:underline;text-underline-offset:1.5px">v</span>erlauf</div>
<svg style="left:1115.8px;top:298.8px" width="10" height="10" viewBox="0 0 10 10"><circle cx="5" cy="5" r="4.1" fill="#f7f7f9" stroke="#a9a9ac" stroke-width="0.8"/></svg>
<div class="t" style="left:1128.70px;top:299.70px;font-size:9px;color:#3f3f3f;transform:scaleX(0.9065);"><span style="text-decoration:underline;text-underline-offset:1.5px">B</span>ild- oder Texturfüllung</div>
<svg style="left:1115.8px;top:314.4px" width="10" height="10" viewBox="0 0 10 10"><circle cx="5" cy="5" r="4.1" fill="#f7f7f9" stroke="#a9a9ac" stroke-width="0.8"/></svg>
<div class="t" style="left:1128.70px;top:315.30px;font-size:9px;color:#3f3f3f;transform:scaleX(0.9180);">Musterf<span style="text-decoration:underline;text-underline-offset:1.5px">ü</span>llung</div>
<svg style="left:1115.8px;top:330px" width="10" height="10" viewBox="0 0 10 10"><circle cx="5" cy="5" r="4.1" fill="#f7f7f9" stroke="#a9a9ac" stroke-width="0.8"/><circle cx="5" cy="5" r="1.9" fill="#444"/></svg>
<div class="t" style="left:1128.70px;top:330.90px;font-size:9px;color:#3f3f3f;transform:scaleX(0.9085);">Automatis<span style="text-decoration:underline;text-underline-offset:1.5px">c</span>h</div>
<div class="t" style="left:1123.40px;top:356.90px;font-size:9px;color:#3f3f3f;transform:scaleX(0.8207);"><span style="text-decoration:underline;text-underline-offset:1.5px">F</span>arbe</div>
<div class="a" style="left:1230.5px;top:351.2px;width:29.299999999999955px;height:19.100000000000023px;background:#f4f3f6;border:0.8px solid #c9c8cc;box-sizing:border-box;"></div>
<svg style="left:1237px;top:354.5px" width="12" height="12" viewBox="0 0 12 12"><path d="M1.6 6.2l3.8-3.8 3.8 3.8-3.8 3.8z" fill="none" stroke="#666" stroke-width="0.8"/><path d="M5.4 2.4V0.6" stroke="#666" stroke-width="0.7"/><path d="M9.2 6.2c.8.6 1.5 1.6 1.5 2.3 0 .5-.4.8-.8.8s-.8-.3-.8-.8z" fill="#3e78b5"/></svg>
<svg style="left:1251.3px;top:359.8px" width="4.4" height="2.6" viewBox="0 0 4.4 2.6"><path d="M0 0h4.4L2.2 2.6z" fill="#555"/></svg>
<svg style="left:1105.5px;top:385.4px" width="5" height="5" viewBox="0 0 5 5"><path d="M5 0v5H0z" fill="#333"/></svg>
<div class="t" style="left:1116.70px;top:383.90px;font-size:9px;color:#2f6f4c;font-weight:700;transform:scaleX(0.8644);">Rahmen</div>
<svg style="left:1116px;top:403.6px" width="10" height="10" viewBox="0 0 10 10"><circle cx="5" cy="5" r="4.1" fill="#f7f7f9" stroke="#a9a9ac" stroke-width="0.8"/></svg>
<div class="t" style="left:1128.50px;top:404.50px;font-size:9px;color:#3f3f3f;transform:scaleX(0.8598);"><span style="text-decoration:underline;text-underline-offset:1.5px">K</span>eine Linie</div>
<svg style="left:1116px;top:419px" width="10" height="10" viewBox="0 0 10 10"><circle cx="5" cy="5" r="4.1" fill="#f7f7f9" stroke="#a9a9ac" stroke-width="0.8"/></svg>
<div class="t" style="left:1128.50px;top:419.90px;font-size:9px;color:#3f3f3f;transform:scaleX(0.8703);"><span style="text-decoration:underline;text-underline-offset:1.5px">E</span>infarbige Linie</div>
<svg style="left:1116px;top:434.3px" width="10" height="10" viewBox="0 0 10 10"><circle cx="5" cy="5" r="4.1" fill="#f7f7f9" stroke="#a9a9ac" stroke-width="0.8"/></svg>
<div class="t" style="left:1128.50px;top:435.20px;font-size:9px;color:#3f3f3f;transform:scaleX(0.8708);">Farb<span style="text-decoration:underline;text-underline-offset:1.5px">v</span>erlaufslinie</div>
<svg style="left:1116px;top:449.7px" width="10" height="10" viewBox="0 0 10 10"><circle cx="5" cy="5" r="4.1" fill="#f7f7f9" stroke="#a9a9ac" stroke-width="0.8"/><circle cx="5" cy="5" r="1.9" fill="#444"/></svg>
<div class="t" style="left:1128.50px;top:450.60px;font-size:9px;color:#3f3f3f;transform:scaleX(0.9186);">Automatis<span style="text-decoration:underline;text-underline-offset:1.5px">c</span>h</div>
<div class="t" style="left:1123.40px;top:476.70px;font-size:9px;color:#333;transform:scaleX(0.8207);"><span style="text-decoration:underline;text-underline-offset:1.5px">F</span>arbe</div>
<div class="a" style="left:1230.3px;top:471.5px;width:29.299999999999955px;height:18.899999999999977px;background:#f4f3f6;border:0.8px solid #c9c8cc;box-sizing:border-box;"></div>
<svg style="left:1237px;top:474.5px" width="12" height="12" viewBox="0 0 12 12"><path d="M1.6 6.2l3.8-3.8 3.8 3.8-3.8 3.8z" fill="none" stroke="#666" stroke-width="0.8"/><path d="M5.4 2.4V0.6" stroke="#666" stroke-width="0.7"/><path d="M9.2 6.2c.8.6 1.5 1.6 1.5 2.3 0 .5-.4.8-.8.8s-.8-.3-.8-.8z" fill="#3e78b5"/><path d="M1 11h9" stroke="#bbb" stroke-width="0.8"/></svg>
<svg style="left:1251.3px;top:479.8px" width="4.4" height="2.6" viewBox="0 0 4.4 2.6"><path d="M0 0h4.4L2.2 2.6z" fill="#555"/></svg>
<div class="t" style="left:1123.40px;top:498.30px;font-size:9px;color:#333;transform:scaleX(0.8565);"><span style="text-decoration:underline;text-underline-offset:1.5px">T</span>ransparenz</div>
<div class="a" style="left:1172px;top:501px;width:35.3px;height:0.8px;background:#888;"></div>
<div class="a" style="left:1171.8px;top:498px;width:0.9px;height:6px;background:#555;"></div>
<div class="a" style="left:1211.6px;top:495.1px;width:48.0px;height:14.699999999999989px;background:#f7f6f9;border:0.8px solid #c3c2c6;box-sizing:border-box;"></div>
<div class="t" style="left:1215.90px;top:498.45px;font-size:8.5px;color:#444;transform:scaleX(0.7846);">0 %</div>
<svg style="left:1253px;top:497.5px" width="5" height="10" viewBox="0 0 5 10"><path d="M0.5 3h4L2.5 0.8z M0.5 7h4L2.5 9.2z" fill="#555"/></svg>
<div class="t" style="left:1123.40px;top:517.60px;font-size:9px;color:#333;transform:scaleX(0.8264);">St<span style="text-decoration:underline;text-underline-offset:1.5px">ä</span>rke</div>
<div class="a" style="left:1211.6px;top:514.5px;width:48.0px;height:14.399999999999977px;background:#f7f6f9;border:0.8px solid #c3c2c6;box-sizing:border-box;"></div>
<div class="t" style="left:1215.90px;top:517.65px;font-size:8.5px;color:#444;transform:scaleX(0.8426);">0,75 Pt.</div>
<svg style="left:1253px;top:516.5px" width="5" height="10" viewBox="0 0 5 10"><path d="M0.5 3h4L2.5 0.8z M0.5 7h4L2.5 9.2z" fill="#555"/></svg>
<div class="t" style="left:1123.40px;top:539.10px;font-size:9px;color:#333;transform:scaleX(0.8958);"><span style="text-decoration:underline;text-underline-offset:1.5px">V</span>erbundtyp</div>
<div class="a" style="left:1230.3px;top:533.4px;width:29.299999999999955px;height:19.200000000000045px;background:#f4f3f6;border:0.8px solid #c9c8cc;box-sizing:border-box;"></div>
<svg style="left:1236px;top:538px" width="12" height="10" viewBox="0 0 12 10"><path d="M0.5 1h11M2.5 4.5h9M0.5 8h11" stroke="#3e6fb0" stroke-width="1.1"/></svg>
<svg style="left:1251.3px;top:541.8px" width="4.4" height="2.6" viewBox="0 0 4.4 2.6"><path d="M0 0h4.4L2.2 2.6z" fill="#555"/></svg>
<div class="t" style="left:1123.40px;top:562.20px;font-size:9px;color:#333;transform:scaleX(0.8910);"><span style="text-decoration:underline;text-underline-offset:1.5px">S</span>trichtyp</div>
<div class="a" style="left:1230.3px;top:557.5px;width:29.299999999999955px;height:19.0px;background:#f4f3f6;border:0.8px solid #c9c8cc;box-sizing:border-box;"></div>
<svg style="left:1236px;top:562px" width="12" height="10" viewBox="0 0 12 10"><path d="M0.5 1h11" stroke="#999" stroke-width="0.8"/><path d="M0.5 4.5h11" stroke="#999" stroke-width="0.8" stroke-dasharray="2 1"/><path d="M0.5 8h11" stroke="#999" stroke-width="0.8" stroke-dasharray="1 1"/></svg>
<svg style="left:1251.3px;top:565.8px" width="4.4" height="2.6" viewBox="0 0 4.4 2.6"><path d="M0 0h4.4L2.2 2.6z" fill="#555"/></svg>
<div class="t" style="left:1123.40px;top:583.70px;font-size:9px;color:#333;transform:scaleX(0.8787);"><span style="text-decoration:underline;text-underline-offset:1.5px">A</span>bschlusstyp</div>
<div class="a" style="left:1207.3px;top:580.6px;width:52.299999999999955px;height:14.600000000000023px;background:#f7f6f9;border:0.8px solid #bdbcc0;box-sizing:border-box;"></div>
<div class="t" style="left:1211.60px;top:583.60px;font-size:9px;color:#333;transform:scaleX(0.8312);">Flach</div>
<svg style="left:1251.3px;top:586.8px" width="4.4" height="2.6" viewBox="0 0 4.4 2.6"><path d="M0 0h4.4L2.2 2.6z" fill="#555"/></svg>
<div class="t" style="left:1123.40px;top:602.60px;font-size:9px;color:#333;transform:scaleX(0.8787);">Anschlussty<span style="text-decoration:underline;text-underline-offset:1.5px">p</span></div>
<div class="a" style="left:1192.2px;top:599.5px;width:67.39999999999986px;height:14.600000000000023px;background:#f7f6f9;border:0.8px solid #bdbcc0;box-sizing:border-box;"></div>
<div class="t" style="left:1196.10px;top:602.60px;font-size:9px;color:#333;transform:scaleX(0.8366);">Rund</div>
<svg style="left:1251.3px;top:605.8px" width="4.4" height="2.6" viewBox="0 0 4.4 2.6"><path d="M0 0h4.4L2.2 2.6z" fill="#555"/></svg>
<div class="t" style="left:1123.30px;top:624.20px;font-size:9px;color:#a3a3a6;transform:scaleX(0.9115);">Anfangspfeiltyp</div>
<div class="a" style="left:1231.3px;top:619.2px;width:28.3px;height:18.299999999999955px;background:#efeef1;"></div>
<svg style="left:1236.5px;top:623.2px" width="12" height="10" viewBox="0 0 12 10"><path d="M0.5 2h10M1.5 7.5h9.5M1.5 0.8v8M9.5 0.5l1.5 1.5-1.5 1.5M2 6l-1.5 1.5L2 9" fill="none" stroke="#aaa" stroke-width="0.8"/></svg>
<svg style="left:1251.3px;top:627.15px" width="4.4" height="2.6" viewBox="0 0 4.4 2.6"><path d="M0 0h4.4L2.2 2.6z" fill="#c0c0c0"/></svg>
<div class="t" style="left:1123.30px;top:647.20px;font-size:9px;color:#a3a3a6;transform:scaleX(0.8994);">A<span style="text-decoration:underline;text-underline-offset:1.5px">n</span>fangspfeilgröße</div>
<div class="a" style="left:1231.3px;top:642px;width:28.3px;height:18.399999999999977px;background:#efeef1;"></div>
<svg style="left:1236.5px;top:647px" width="12" height="9" viewBox="0 0 12 9"><path d="M0.5 1h10M0.5 3.2h10M0.5 5.4h10" stroke="#aaa" stroke-width="0.7"/><path d="M0.5 7.8h10" stroke="#999" stroke-width="1.3"/></svg>
<svg style="left:1251.3px;top:650.0px" width="4.4" height="2.6" viewBox="0 0 4.4 2.6"><path d="M0 0h4.4L2.2 2.6z" fill="#c0c0c0"/></svg>
<div class="t" style="left:1123.30px;top:671.00px;font-size:9px;color:#a3a3a6;transform:scaleX(0.8982);">En<span style="text-decoration:underline;text-underline-offset:1.5px">d</span>pfeiltyp</div>
<div class="a" style="left:1231.3px;top:666px;width:28.3px;height:18.200000000000045px;background:#efeef1;"></div>
<svg style="left:1236.5px;top:670px" width="12" height="10" viewBox="0 0 12 10"><path d="M0.5 2h10M1.5 7.5h9.5M1.5 0.8v8M9.5 0.5l1.5 1.5-1.5 1.5M2 6l-1.5 1.5L2 9" fill="none" stroke="#aaa" stroke-width="0.8"/></svg>
<svg style="left:1251.3px;top:673.9px" width="4.4" height="2.6" viewBox="0 0 4.4 2.6"><path d="M0 0h4.4L2.2 2.6z" fill="#c0c0c0"/></svg>
<div class="t" style="left:1123.30px;top:693.90px;font-size:9px;color:#a3a3a6;transform:scaleX(0.8832);">Endpfeilg<span style="text-decoration:underline;text-underline-offset:1.5px">r</span>öße</div>
<div class="a" style="left:1231.3px;top:689.5px;width:28.3px;height:18.0px;background:#efeef1;"></div>
<svg style="left:1236.5px;top:694.5px" width="12" height="9" viewBox="0 0 12 9"><path d="M0.5 1h10M0.5 3.2h10M0.5 5.4h10" stroke="#aaa" stroke-width="0.7"/><path d="M0.5 7.8h10" stroke="#999" stroke-width="1.3"/></svg>
<svg style="left:1251.3px;top:697.3px" width="4.4" height="2.6" viewBox="0 0 4.4 2.6"><path d="M0 0h4.4L2.2 2.6z" fill="#c0c0c0"/></svg>
</body></html>
